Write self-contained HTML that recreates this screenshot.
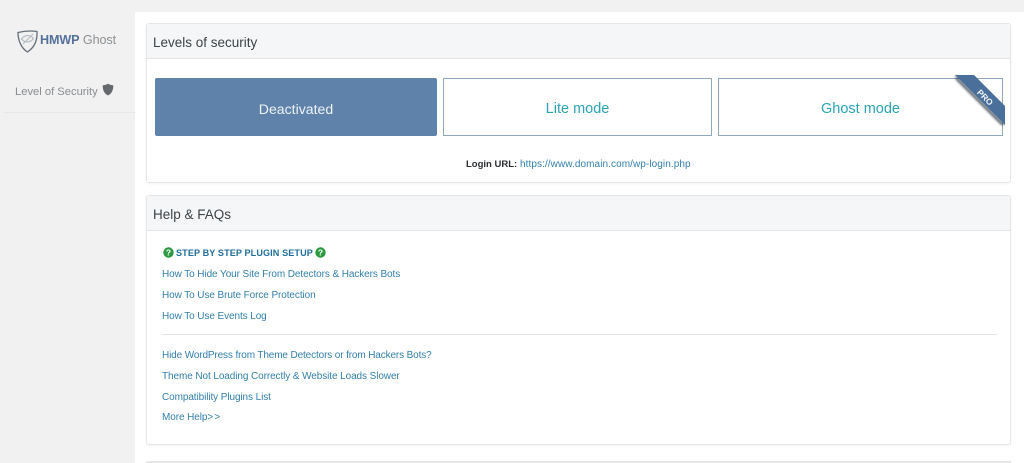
<!DOCTYPE html>
<html><head><meta charset="utf-8">
<style>
html,body{margin:0;padding:0}
body{width:1024px;height:463px;overflow:hidden;position:relative;background:#f1f1f1;font-family:"Liberation Sans",sans-serif}
.a{position:absolute;white-space:nowrap}
.main{left:135px;top:12px;width:889px;height:451px;background:#fff;border-top-left-radius:2px}
.card{left:146px;width:865px;background:#fff;border:1px solid #e4e6e8;border-radius:3px;box-sizing:border-box;box-shadow:0 1px 2px rgba(0,0,0,.05)}
.hd{position:absolute;left:0;top:0;right:0;height:34px;background:#f5f6f7;border-bottom:1px solid #e2e4e6;box-sizing:content-box;border-radius:3px 3px 0 0}
.ttl{font-size:13.500px;color:#3d4246}
.btn{top:78px;height:58px;box-sizing:border-box;border:1px solid #8fa8c0;font-size:14.500px;color:#2ba3b5;text-align:center;line-height:60px;background:#fff}
.l{font-size:10px;letter-spacing:-.09px;color:#327fab;left:162px;line-height:14px}
</style></head><body>
<div class="a main"></div>

<svg class="a" style="left:16px;top:28px" width="24" height="26" viewBox="0 0 24 26" fill="none">
<path d="M2 4.500C8 3 14 2.500 21 3.500C21.500 12 19 19 11.500 24C5 20 2 12 2 4.500Z" stroke="#66707a" stroke-width="1.300"/>
<path d="M5.500 11C9 6.500 14 6.500 17.500 10.500C14 15 9 15 5.500 11Z" stroke="#b4bac0" stroke-width="1.100"/>
<path d="M7 16L17 6" stroke="#b4bac0" stroke-width="1.100"/>
</svg>
<div class="a" style="left:40px;top:32px;font-size:12.600px;line-height:17px;color:#8c9093;letter-spacing:-.1px"><b style="color:#55719b">HMWP</b> Ghost</div>
<div class="a" style="left:15px;top:85px;font-size:11.200px;line-height:14px;color:#8a8d90">Level of Security</div>
<svg class="a" style="left:102px;top:83px" width="12" height="13" viewBox="0 0 12 13"><path d="M6 .8C7.800 1.800 9.500 2.200 11.300 2.200C11.300 7 10 10.300 6 12.500C2 10.300 .7 7 .7 2.200C2.500 2.200 4.200 1.800 6 .8Z" fill="#666a6e"/></svg>
<div class="a" style="left:4px;top:112px;width:131px;height:1px;background:#e8e8e8"></div>

<div class="a card" style="top:23px;height:160px"><div class="hd"></div></div>
<div class="a ttl" style="left:153px;top:34px;line-height:18px">Levels of security</div>
<div class="a btn" style="left:155px;width:282px;background:#5f82aa;border-color:#5f82aa;color:#eef2f6;border-radius:2px;font-size:14.100px">Deactivated</div>
<div class="a btn" style="left:443px;width:269px">Lite mode</div>
<div class="a btn" style="left:718px;width:285px">Ghost mode</div>
<svg class="a" style="left:950px;top:70px" width="60" height="60" viewBox="0 0 60 60">
<defs><filter id="b" x="-20%" y="-20%" width="140%" height="140%"><feGaussianBlur stdDeviation="1"/></filter></defs>
<path d="M5 5L55 55L51 55L6 10Z" fill="#1c2733" opacity=".7" filter="url(#b)"/>
<path d="M5 5H24L55 36V55Z" fill="#4a6f9b"/>
<text x="0" y="0" transform="translate(33 29.500) rotate(45)" font-family="Liberation Sans" font-size="8.500" font-weight="700" fill="#f2f5f8" text-anchor="middle">PRO</text>
</svg>
<div class="a" style="left:466px;top:158px;font-size:9.500px;line-height:14px;color:#2a2d30"><b>Login URL:</b></div>
<div class="a" style="left:520px;top:158px;font-size:10px;line-height:14px;color:#327fab;letter-spacing:.08px">https://www.domain.com/wp-login.php</div>

<div class="a card" style="top:195px;height:250px"><div class="hd"></div></div>
<div class="a ttl" style="left:153px;top:206px;line-height:18px">Help &amp; FAQs</div>

<svg class="a" style="left:163px;top:247px" width="11" height="11" viewBox="0 0 11 11"><circle cx="5.500" cy="5.500" r="5.200" fill="#2b9a3e"/><text x="5.500" y="8.500" font-family="Liberation Sans" font-size="8.500" font-weight="700" fill="#fff" text-anchor="middle">?</text></svg>
<div class="a" style="left:176px;top:246px;font-size:9.100px;line-height:14px;font-weight:700;color:#1f6e9c;letter-spacing:.1px">STEP BY STEP PLUGIN SETUP</div>
<svg class="a" style="left:315px;top:247px" width="11" height="11" viewBox="0 0 11 11"><circle cx="5.500" cy="5.500" r="5.200" fill="#2b9a3e"/><text x="5.500" y="8.500" font-family="Liberation Sans" font-size="8.500" font-weight="700" fill="#fff" text-anchor="middle">?</text></svg>

<div class="a l" style="top:268px">How To Hide Your Site From Detectors &amp; Hackers Bots</div>
<div class="a l" style="top:289px">How To Use Brute Force Protection</div>
<div class="a l" style="top:310px">How To Use Events Log</div>
<div class="a" style="left:162px;top:334px;width:835px;height:1px;background:#e3e3e3"></div>
<div class="a l" style="top:349px;letter-spacing:-.13px">Hide WordPress from Theme Detectors or from Hackers Bots?</div>
<div class="a l" style="top:370px">Theme Not Loading Correctly &amp; Website Loads Slower</div>
<div class="a l" style="top:391px">Compatibility Plugins List</div>
<div class="a l" style="top:411px">More Help<span style="letter-spacing:1.200px">&gt;&gt;</span></div>

<div class="a" style="left:146px;top:461px;width:865px;height:2px;background:#e6e7e8"></div>
</body></html>
